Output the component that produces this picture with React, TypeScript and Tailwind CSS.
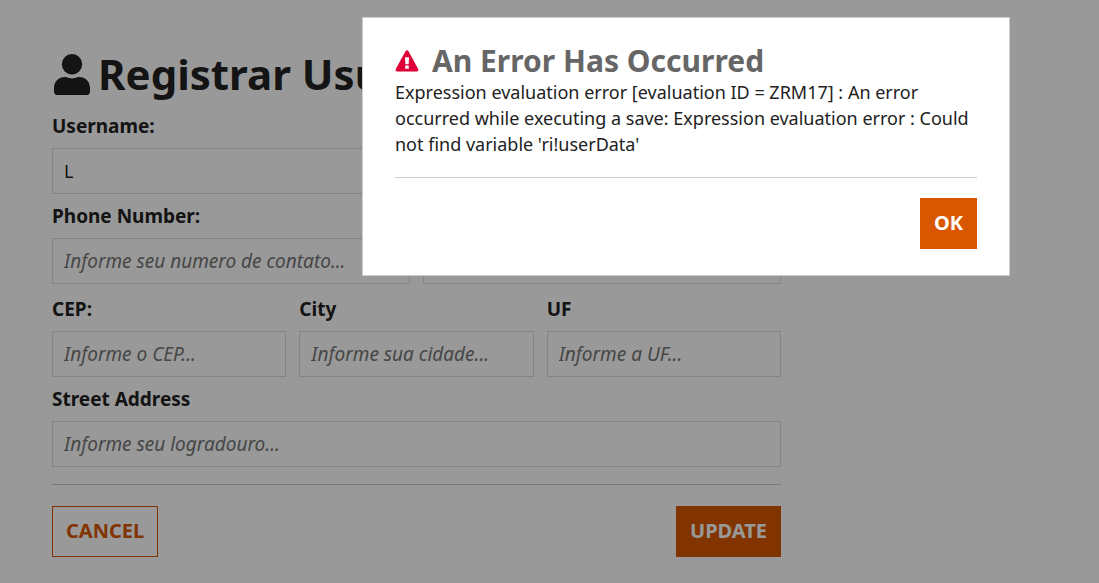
import { useId, useState } from "react";
import { clsx } from "clsx";

type FieldProps = {
  label: string;
  placeholder?: string;
  defaultValue?: string;
};

function Field({ label, placeholder, defaultValue }: FieldProps) {
  const id = useId();
  return (
    <div className="flex min-w-0 flex-1 flex-col gap-2">
      <label htmlFor={id} className="text-[19px] font-bold leading-7">
        {label}
      </label>
      <input
        id={id}
        type="text"
        placeholder={placeholder}
        defaultValue={defaultValue}
        className="h-[46px] w-full border border-[#dcdcdc] bg-white px-[11px] text-lg placeholder:text-[19px] placeholder:italic placeholder:text-[#767676] focus:outline-none"
      />
    </div>
  );
}

function Button({ children, outline, onClick }: { children: string; outline?: boolean; onClick?: () => void }) {
  return (
    <button
      type="button"
      onClick={onClick}
      className={clsx(
        "h-[51px] border border-[#d95700] px-[13px] pb-0.5 text-xl font-bold",
        outline ? "bg-white text-[#d95700]" : "bg-[#d95700] text-white",
      )}
    >
      {children}
    </button>
  );
}

function UserIcon() {
  return (
    <svg viewBox="0 0 36 42" className="h-[42px] w-9 shrink-0" fill="currentColor" aria-hidden="true">
      <circle cx="18" cy="10.3" r="10.2" />
      <path d="M10.6 23h1.4a14.4 14.4 0 0 0 12 0h1.4A10.6 10.6 0 0 1 36 33.6v3.6a3.9 3.9 0 0 1-3.9 3.9H3.9A3.9 3.9 0 0 1 0 37.2v-3.6A10.6 10.6 0 0 1 10.6 23Z" />
    </svg>
  );
}

function WarningIcon() {
  return (
    <svg viewBox="0 0 24 22" className="h-[22px] w-6 shrink-0" aria-hidden="true">
      <path
        d="M10.5 1.2a1.7 1.7 0 0 1 3 0l9.7 17.9A1.7 1.7 0 0 1 21.7 21.6H2.3A1.7 1.7 0 0 1 .8 19.1Z"
        fill="#de0037"
      />
      <path d="M10 7.2h4l-.3 7h-3.4Z" fill="#fff" />
      <rect x="10.2" y="15.6" width="3.6" height="3.2" rx="0.6" fill="#fff" />
    </svg>
  );
}

function ErrorDialog({ onClose }: { onClose: () => void }) {
  return (
    <div className="fixed inset-0 flex items-start justify-end bg-black/40 pl-4 pr-[89px] pt-[17px]">
      <div
        role="alertdialog"
        aria-labelledby="error-title"
        aria-describedby="error-text"
        className="w-full max-w-[648px] border border-[#ccc] bg-white px-8 pb-[26px] pt-[25px]"
      >
        <div className="flex items-center gap-[13px]">
          <WarningIcon />
          <h2 id="error-title" className="text-[30px] font-bold leading-9 text-[#666]">
            An Error Has Occurred
          </h2>
        </div>
        <p id="error-text" className="text-lg leading-[26px]">
          Expression evaluation error [evaluation ID = ZRM17] : An error occurred while executing a save: Expression
          evaluation error : Could not find variable 'ri!userData'
        </p>
        <div className="mt-5 flex justify-end border-t border-[#ccc] pt-5">
          <Button onClick={onClose}>OK</Button>
        </div>
      </div>
    </div>
  );
}

export default function App() {
  const [hasError, setHasError] = useState(true);

  return (
    <main className="min-h-screen bg-white px-[52px] pb-6 pt-12 font-['Noto_Sans',sans-serif] text-[#222]">
      <form className="flex max-w-[729px] flex-col">
        <div className="flex h-[54px] items-center gap-2 pl-0.5">
          <UserIcon />
          <h1 className="whitespace-nowrap pb-0.5 text-[42px] font-bold leading-[52px]">Registrar Usuario</h1>
        </div>

        <div className="mt-2.5 flex flex-col gap-2">
          <Field label="Username:" defaultValue="L" />
          <div className="flex gap-[13px]">
            <Field label="Phone Number:" placeholder="Informe seu numero de contato..." />
            <Field label="Email:" placeholder="Informe seu email..." />
          </div>
          <div className="flex gap-[13px] pt-[3px]">
            <Field label="CEP:" placeholder="Informe o CEP..." />
            <Field label="City" placeholder="Informe sua cidade..." />
            <Field label="UF" placeholder="Informe a UF..." />
          </div>
          <Field label="Street Address" placeholder="Informe seu logradouro..." />
        </div>

        <div className="mt-[17px] flex justify-between border-t border-[#ccc] pt-[21px]">
          <Button outline>CANCEL</Button>
          <Button>UPDATE</Button>
        </div>
      </form>

      {hasError && <ErrorDialog onClose={() => setHasError(false)} />}
    </main>
  );
}
